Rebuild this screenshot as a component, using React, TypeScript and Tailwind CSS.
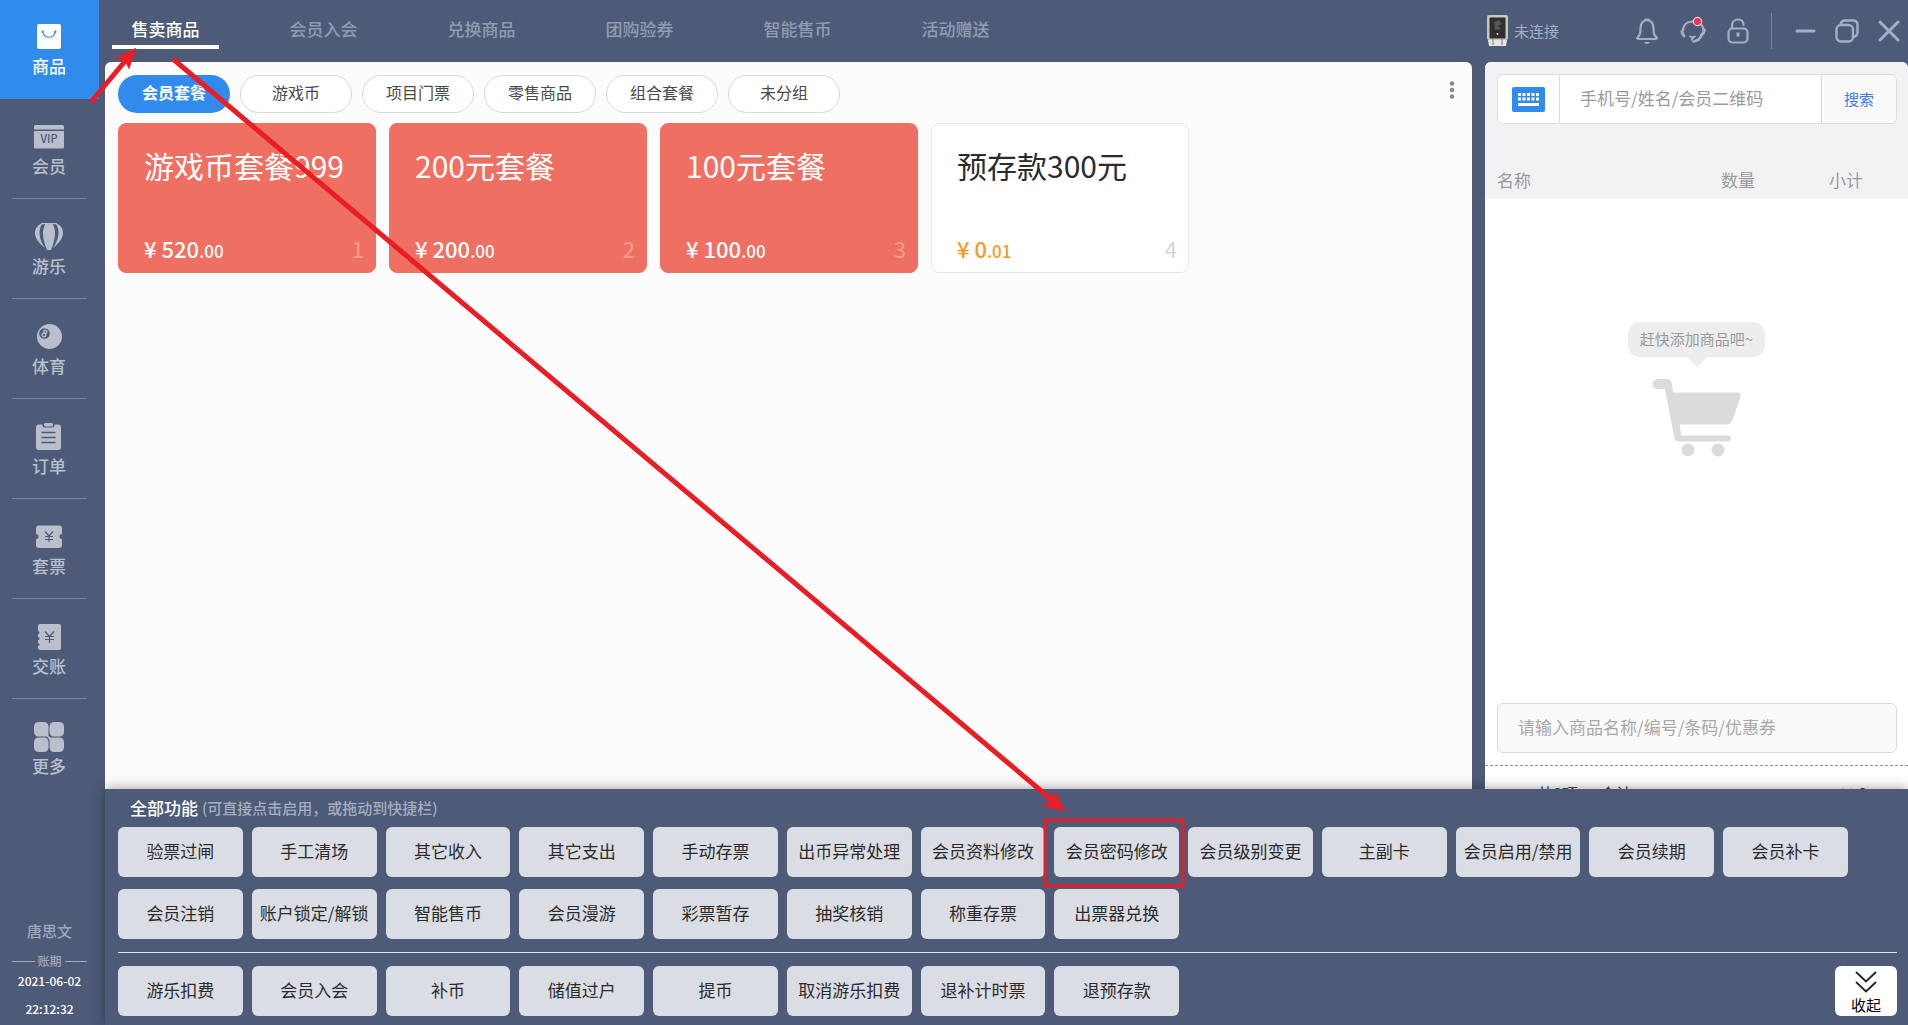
import type { ReactNode } from "react";

const navItems: { label: string; icon: ReactNode }[] = [
  {
    label: "商品",
    icon: (
      <>
        <rect x="3" y="2" width="24" height="25" rx="2" fill="currentColor" />
        <path d="M9 10c1 7 11 7 12 0" fill="none" stroke="#318bec" strokeWidth="1.2" />
        <circle cx="8.7" cy="9.7" r="1.2" fill="#318bec" />
        <circle cx="21.3" cy="9.7" r="1.2" fill="#318bec" />
      </>
    ),
  },
  {
    label: "会员",
    icon: (
      <>
        <path d="M1.5 3h27a1.5 1.5 0 0 1 1.5 1.5V7.5H0V4.5A1.5 1.5 0 0 1 1.5 3z" fill="currentColor" />
        <path d="M0 9h30v16a1.5 1.5 0 0 1-1.5 1.5h-27A1.5 1.5 0 0 1 0 25z" fill="currentColor" />
        <text x="15" y="21" fontSize="11" fontWeight="500" textAnchor="middle" fill="#4d5b79">
          VIP
        </text>
      </>
    ),
  },
  {
    label: "游乐",
    icon: (
      <>
        <path d="M9 1C3 3 1 7 1 11c0 6 5 11 10 15C7 20 5.5 15 5.5 10.5 5.5 6.5 7 3 9 1z" fill="currentColor" />
        <path d="M21 1c6 2 8 6 8 10 0 6-5 11-10 15 4-6 5.5-11 5.5-15.5C24.5 6.5 23 3 21 1z" fill="currentColor" />
        <path d="M12 1h6c2 3 3 6 3 10 0 5-1.5 11-4 17h-4C10.5 22 9 16 9 11c0-4 1-7 3-10z" fill="currentColor" />
        <path d="M7 1h16v1.2H7z" fill="currentColor" />
      </>
    ),
  },
  {
    label: "体育",
    icon: (
      <>
        <circle cx="15.5" cy="14.5" r="12.5" fill="currentColor" />
        <circle cx="10.5" cy="11.5" r="5.3" fill="#4d5b79" />
        <g fill="none" stroke="currentColor" strokeWidth="1.3" transform="rotate(25 10.5 11.5)">
          <circle cx="10.5" cy="9.7" r="1.6" />
          <circle cx="10.5" cy="13.1" r="1.9" />
        </g>
      </>
    ),
  },
  {
    label: "订单",
    icon: (
      <>
        <path
          d="M5 2.5h3.5v1a2 2 0 0 0 2 2h8a2 2 0 0 0 2-2v-1H24a3 3 0 0 1 3 3V25a3 3 0 0 1-3 3H5a3 3 0 0 1-3-3V5.5a3 3 0 0 1 3-3z"
          fill="currentColor"
        />
        <rect x="10" y="1" width="9" height="3.5" rx="1.5" fill="currentColor" />
        <path d="M7.5 10.5h14M7.5 15.5h14M7.5 20.5h14" stroke="#4d5b79" strokeWidth="1.4" />
      </>
    ),
  },
  {
    label: "套票",
    icon: (
      <>
        <path
          d="M5 3.5h20a3 3 0 0 1 3 3V12a2.5 2.5 0 0 0 0 5v6a3 3 0 0 1-3 3H5a3 3 0 0 1-3-3v-6a2.5 2.5 0 0 0 0-5V6.5a3 3 0 0 1 3-3z"
          fill="currentColor"
        />
        <path d="M11 9.5l4 4.5 4-4.5M15 14v6M11 14.5h8M11 17.5h8" fill="none" stroke="#4d5b79" strokeWidth="1.2" />
      </>
    ),
  },
  {
    label: "交账",
    icon: (
      <>
        <path
          d="M6 2h19a2 2 0 0 1 2 2v22a2 2 0 0 1-2 2H6a2 2 0 0 1-2-2v-2a1.5 1.5 0 0 0 0-3v-3a1.5 1.5 0 0 0 0-3v-3a1.5 1.5 0 0 0 0-3V4a2 2 0 0 1 2-2z"
          fill="currentColor"
        />
        <path d="M11 9.5l4.5 5 4.5-5M15.5 14.5V21M11 14.5h9M11 17.5h9" fill="none" stroke="#4d5b79" strokeWidth="1.2" />
      </>
    ),
  },
  {
    label: "更多",
    icon: (
      <>
        <path d="M4.5 0H10a4.5 4.5 0 0 1 4.500 4.500v10h-10A4.500 4.500 0 0 1 0 10V4.500A4.500 4.500 0 0 1 4.500 0z" fill="currentColor" />
        <rect x="15.500" y="0" width="14.500" height="14.500" rx="4.500" fill="currentColor" />
        <rect x="0" y="15.500" width="14.500" height="14.500" rx="4.500" fill="currentColor" />
        <path d="M15.500 15.500h10a4.500 4.500 0 0 1 4.500 4.500v5.500a4.500 4.500 0 0 1-4.500 4.500H20a4.500 4.500 0 0 1-4.500-4.500z" fill="currentColor" />
        <path d="M11 12l4 2.500 4 3.500-1 2-4-4z" fill="currentColor" />
      </>
    ),
  },
];

const tabs = ["售卖商品", "会员入会", "兑换商品", "团购验券", "智能售币", "活动赠送"];

const categories = ["会员套餐", "游戏币", "项目门票", "零售商品", "组合套餐", "未分组"];

const products = [
  { name: "游戏币套餐999", yuan: "520", cents: ".00", highlight: true },
  { name: "200元套餐", yuan: "200", cents: ".00", highlight: true },
  { name: "100元套餐", yuan: "100", cents: ".00", highlight: true },
  { name: "预存款300元", yuan: "0", cents: ".01", highlight: false },
];

const allFunctions = [
  "验票过闸", "手工清场", "其它收入", "其它支出", "手动存票", "出币异常处理", "会员资料修改",
  "会员密码修改", "会员级别变更", "主副卡", "会员启用/禁用", "会员续期", "会员补卡",
  "会员注销", "账户锁定/解锁", "智能售币", "会员漫游", "彩票暂存", "抽奖核销", "称重存票", "出票器兑换",
];

const shortcuts = ["游乐扣费", "会员入会", "补币", "储值过户", "提币", "取消游乐扣费", "退补计时票", "退预存款"];

function Sidebar() {
  return (
    <aside className="flex w-[99px] shrink-0 flex-col text-[#b9bfcb]">
      <nav>
        <ul>
          {navItems.map((item, i) => (
            <li key={item.label} className="h-[100px]">
              <button
                type="button"
                className={
                  i === 0
                    ? "flex h-[99px] w-full flex-col items-center bg-[#318bec] pt-[22px] pr-px text-[17px] leading-6 font-medium text-white"
                    : "flex h-[98px] w-full flex-col items-center pt-[22px] pr-px text-[17px] leading-6 font-medium"
                }
              >
                <svg width="30" height="30" viewBox="0 0 30 30" className="mb-[2px] shrink-0">
                  {item.icon}
                </svg>
                {item.label}
              </button>
              {i > 0 && i < navItems.length - 1 && <hr className="mx-3 border-[#7683a0]" />}
            </li>
          ))}
        </ul>
      </nav>

      <div className="mt-auto flex flex-col items-center pb-[6px] text-xs font-medium">
        <p className="mb-[10px] text-[15px] leading-6 text-[#a0a8b9]">唐思文</p>
        <div className="mb-[2px] flex w-full items-center gap-[3px] px-3 leading-4 text-[#a0a8b9]">
          <span className="h-px flex-1 bg-[#a0a8b9]" />
          账期
          <span className="h-px flex-1 bg-[#a0a8b9]" />
        </div>
        <p className="mb-2 leading-5 text-white">2021-06-02</p>
        <p className="leading-5 text-white">22:12:32</p>
      </div>
    </aside>
  );
}

function HeaderTools() {
  return (
    <div className="flex w-[423px] shrink-0 items-center pr-2 text-[#a6afc2]">
      <svg width="22" height="32" viewBox="0 0 22 32" className="ml-[2px]">
        <rect x="0" y="0" width="21" height="25" rx="2" fill="#c9c6be" />
        <rect x="2.500" y="2.500" width="16" height="21" rx="1" fill="#2f2f2f" />
        <path d="M7 7l5-2 3 4-4 2 3 3-6 1z" fill="#555" />
        <circle cx="10.500" cy="19" r="1" fill="#ddd" />
        <path d="M1 25h19l-1 6H2z" fill="#e6e4de" />
        <path d="M6 24v6M15 24v6" stroke="#77746c" />
      </svg>
      <span className="ml-[5px] flex-1 pt-px text-[15px]">未连接</span>

      <div className="flex items-center gap-5">
        <button type="button" aria-label="通知">
          <svg width="24" height="28" viewBox="0 0 24 28" fill="none" stroke="currentColor" strokeWidth="2.200">
            <path
              d="M12 3c-4.500.500-6.500 4-6.500 8.500 0 5-.5 6.500-3.500 9.500.5 1 1 1 2 1h16c1 0 1.500 0 2-1-3-3-3.500-4.500-3.500-9.500C18.500 7 16.500 3.500 12 3z"
              strokeLinejoin="round"
            />
            <path d="M10.500 2.500h3" strokeLinecap="round" />
            <path d="M9 25h6c-1 2.500-5 2.500-6 0z" fill="currentColor" stroke="none" />
          </svg>
        </button>
        <button type="button" aria-label="客服">
          <svg width="28" height="30" viewBox="0 0 28 30" fill="none" stroke="currentColor" strokeWidth="2.200">
            <path d="M4 15C4 9 8 5.500 14 5.500S24.500 9 24.500 15" />
            <path d="M3 15.500c0 2 1 3.500 2 4.500M25.500 14c-.5 3-3 5-3 5" strokeWidth="3" strokeLinecap="round" />
            <path d="M22.500 19c-1 3-4 6-8 6.500" strokeWidth="2.600" strokeLinecap="round" />
            <path d="M10.500 20c1.500 1.500 4.500 1.500 6 0M12.500 24.500l1.500-3" strokeWidth="2" />
            <circle cx="18.500" cy="5.500" r="4.200" fill="#e8394f" stroke="#fff" strokeWidth="1" />
          </svg>
        </button>
        <button type="button" aria-label="锁定">
          <svg width="22" height="28" viewBox="0 0 22 28" fill="none" stroke="currentColor" strokeWidth="2.200">
            <rect x="1.500" y="11.500" width="19" height="14" rx="4" />
            <path d="M5 11V8.500C5 5 7.500 2.500 11 2.500s5.500 2.500 5.500 5.500" strokeLinecap="round" />
            <path d="M11 15.500v4" strokeWidth="3" />
          </svg>
        </button>
      </div>

      <span className="mx-[22px] h-9 w-px bg-[#77839d]" />

      <div className="flex items-center gap-[19px]">
        <button type="button" aria-label="最小化">
          <svg width="22" height="24" viewBox="0 0 22 24" stroke="currentColor" strokeWidth="3" strokeLinecap="round">
            <path d="M3 12h17" />
          </svg>
        </button>
        <button type="button" aria-label="还原">
          <svg width="24" height="24" viewBox="0 0 24 24" fill="none" stroke="currentColor" strokeWidth="2.400">
            <rect x="1.500" y="6" width="16.500" height="16.500" rx="4.500" />
            <path d="M5.500 5.500C6 3 7.500 1.500 10 1.500h8c3 0 4.500 1.500 4.500 4.500v7c0 3-1.500 4.500-4 5" />
          </svg>
        </button>
        <button type="button" aria-label="关闭">
          <svg width="22" height="24" viewBox="0 0 22 24" stroke="currentColor" strokeWidth="3" strokeLinecap="round">
            <path d="M2 3l18 18M20 3L2 21" />
          </svg>
        </button>
      </div>
    </div>
  );
}

function ProductPanel() {
  return (
    <main className="flex-1 rounded-t-md bg-[#fcfcfc] px-[13px] pt-[13px]">
      <div className="flex items-start justify-between">
        <div className="flex gap-[10px]">
          {categories.map((c, i) => (
            <button
              key={c}
              type="button"
              className={
                i === 0
                  ? "h-[38px] w-[112px] rounded-full bg-[#318bec] pb-1 text-base font-bold text-white"
                  : "h-[38px] w-[112px] rounded-full border border-[#d9d9d9] bg-white pb-1 text-base text-[#4a4a4a]"
              }
            >
              {c}
            </button>
          ))}
        </div>
        <button type="button" aria-label="更多操作" className="mt-1 mr-1">
          <svg width="6" height="20" viewBox="0 0 6 20" fill="#8a8a8a">
            <circle cx="3" cy="4.500" r="2.300" />
            <circle cx="3" cy="11" r="2.300" />
            <circle cx="3" cy="17.500" r="2.300" />
          </svg>
        </button>
      </div>

      <div className="mt-[10px] flex flex-wrap gap-[13px]">
        {products.map((p, i) => (
          <button
            key={p.name}
            type="button"
            className={
              p.highlight
                ? "flex h-[150px] w-[258px] flex-col justify-between rounded-lg border border-[#ef6f62] bg-[#ef6f62] pt-[17px] pr-[11px] pb-[3px] pl-[25px] text-left text-white"
                : "flex h-[150px] w-[258px] flex-col justify-between rounded-lg border border-[#e8e8e8] bg-white pt-[17px] pr-[11px] pb-[3px] pl-[25px] text-left text-[#2b2b2b]"
            }
          >
            <span className="text-[30px] leading-[48px]">{p.name}</span>
            <span className="flex items-baseline justify-between text-[22px] leading-9">
              <span className={p.highlight ? "font-medium" : "font-medium text-[#f79a1e]"}>
                ¥ {p.yuan}
                <span className="text-[17px]">{p.cents}</span>
              </span>
              <span className={p.highlight ? "text-[#f79d93]" : "text-[#d5d5d5]"}>{i + 1}</span>
            </span>
          </button>
        ))}
      </div>
    </main>
  );
}

function CartPanel() {
  return (
    <section className="flex w-[423px] shrink-0 flex-col overflow-hidden rounded-t-md bg-white">
      <div className="bg-[#f2f2f4] pt-3 pr-[11px] pl-3">
        <form className="mb-9 flex h-[50px] overflow-hidden rounded-md border border-[#dcdcdc] bg-white">
          <button type="button" aria-label="键盘" className="flex w-[62px] items-center justify-center border-r border-[#dcdcdc]">
            <svg width="33" height="25" viewBox="0 0 33 25">
              <rect width="33" height="25" rx="2" fill="#318bec" />
              <path d="M6 7.500h21M6 12h21" stroke="#fff" strokeWidth="3" strokeDasharray="3 1.500" />
              <path d="M6 17.500h21" stroke="#fff" strokeWidth="3" />
            </svg>
          </button>
          <input
            type="text"
            aria-label="会员搜索"
            placeholder="手机号/姓名/会员二维码"
            className="min-w-0 flex-1 px-5 pb-[2px] text-[17px] outline-none placeholder:text-[#9a9a9a]"
          />
          <button type="submit" className="w-[75px] border-l border-[#dcdcdc] bg-[#fafafa] text-[15px] text-[#3b7df0]">
            搜索
          </button>
        </form>
        <table className="w-full table-fixed text-[17px] text-[#9a9a9a]">
          <thead>
            <tr className="h-[39px]">
              <th className="text-left font-normal">名称</th>
              <th className="w-[108px] text-left font-normal">数量</th>
              <th className="w-[68px] text-left font-normal">小计</th>
            </tr>
          </thead>
        </table>
      </div>

      <div className="flex flex-1 flex-col items-center pt-[123px]">
        <p className="flex h-[35px] items-center rounded-xl bg-[#ededed] px-3 text-[15px] text-[#999]">赶快添加商品吧~</p>
        <svg width="20" height="10" viewBox="0 0 20 10" fill="#ededed">
          <path d="M0 0h20l-10 10z" />
        </svg>
        <svg width="90" height="78" viewBox="0 0 90 78" fill="#dbdbdb" className="mt-3">
          <path d="M6 0h8c4 0 5 2 6 5l1 8.500h64c3 0 4 2 3.500 4.500l-8 23c-1 3-3 4.500-6 4.500H28l1 11h47c4 0 4 6 0 6H28c-4 0-5-1-6-5L13 10H6C-1 10-1 0 6 0z" />
          <circle cx="36" cy="71" r="6.500" />
          <circle cx="66" cy="71" r="6.500" />
        </svg>
      </div>

      <div className="pr-[11px] pb-3 pl-3">
        <input
          type="text"
          aria-label="商品搜索"
          placeholder="请输入商品名称/编号/条码/优惠券"
          className="h-[50px] w-full rounded-md border border-[#dcdcdc] bg-[#fafafa] px-5 pb-[3px] text-[17px] outline-none placeholder:text-[#a8a8a8]"
        />
      </div>
      <svg width="100%" height="1" className="shrink-0">
        <path d="M0 0.500h4000" stroke="#8f8f8f" strokeDasharray="3 2" />
      </svg>
      <div className="flex h-[259px] items-start pt-[15px] pr-10 pl-[52px] text-base text-[#444]">
        <span>共0项</span>
        <span className="ml-[22px] flex-1">合计</span>
        <span className="text-xl">¥ 0</span>
      </div>
    </section>
  );
}

function FunctionButton({ label }: { label: string }) {
  return (
    <button type="button" className="h-[50px] rounded-md bg-[#dadde4] pb-[2px] text-[17px] whitespace-nowrap text-[#2b2b2b]">
      {label}
    </button>
  );
}

function FunctionPanel() {
  return (
    <section className="absolute right-0 bottom-0 left-[105px] bg-[#4d5b79] pr-[11px] pb-[9px] pl-[13px] shadow-[0_0_12px_rgba(0,0,0,0.4)]">
      <h2 className="flex h-[38px] items-center gap-1 pl-3 text-[17px] font-medium text-white">
        全部功能
        <span className="text-[15px] text-[#a6adbd]">(可直接点击启用，或拖动到快捷栏)</span>
      </h2>
      <div className="mr-[49px] grid grid-cols-13 gap-x-[9px] gap-y-3">
        {allFunctions.map((f) => (
          <FunctionButton key={f} label={f} />
        ))}
      </div>
      <hr className="my-[13px] border-[#dfe3ec]" />
      <div className="flex">
        <div className="grid flex-1 grid-cols-13 gap-x-[9px]">
          {shortcuts.map((f) => (
            <FunctionButton key={f} label={f} />
          ))}
        </div>
        <button
          type="button"
          className="-ml-[13px] flex h-[50px] w-[62px] flex-col items-center rounded-md bg-white pt-[5px] text-[15px] leading-6 text-black"
        >
          <svg width="22" height="22" viewBox="0 0 22 22" fill="none" stroke="#222" strokeWidth="1.800" className="shrink-0">
            <path d="M1 1l10 9.500L21 1M1 11l10 9.500L21 11" />
          </svg>
          收起
        </button>
      </div>
    </section>
  );
}

// 操作指引：红色箭头和红框
function GuideOverlay() {
  return (
    <svg
      viewBox="0 0 1908 1025"
      preserveAspectRatio="none"
      className="pointer-events-none absolute inset-0 h-full w-full"
      fill="#ea1c24"
      stroke="#ea1c24"
    >
      <path d="M91 102L126 60" strokeWidth="5" />
      <path d="M136 48L129 69L125 61L116 58z" strokeWidth="0.500" />
      <path d="M173 59L1052 800" strokeWidth="5" />
      <path d="M1065 811L1043 806L1051 800L1055 792z" strokeWidth="0.500" />
      <rect x="1045" y="820" width="138" height="66" fill="none" strokeWidth="3" />
    </svg>
  );
}

export default function App() {
  return (
    <div className="relative flex h-screen overflow-hidden bg-[#4d5b79] font-['Noto_Sans_CJK_SC',sans-serif]">
      <Sidebar />
      <div className="flex min-w-0 flex-1 flex-col pl-[6px]">
        <header className="flex h-[62px] shrink-0 justify-between">
          <nav className="flex gap-[51px] pl-[7px]">
            {tabs.map((t, i) => (
              <a
                key={t}
                href="#"
                className={
                  i === 0
                    ? "h-[49px] w-[107px] border-b-4 border-white pt-[17px] text-center text-[17px] leading-6 font-medium text-white"
                    : "h-[49px] w-[107px] pt-[17px] text-center text-[17px] leading-6 font-medium text-[#919bb0]"
                }
              >
                {t}
              </a>
            ))}
          </nav>
          <HeaderTools />
        </header>
        <div className="flex min-h-0 flex-1 gap-[13px]">
          <ProductPanel />
          <CartPanel />
        </div>
      </div>
      <FunctionPanel />
      <GuideOverlay />
    </div>
  );
}
